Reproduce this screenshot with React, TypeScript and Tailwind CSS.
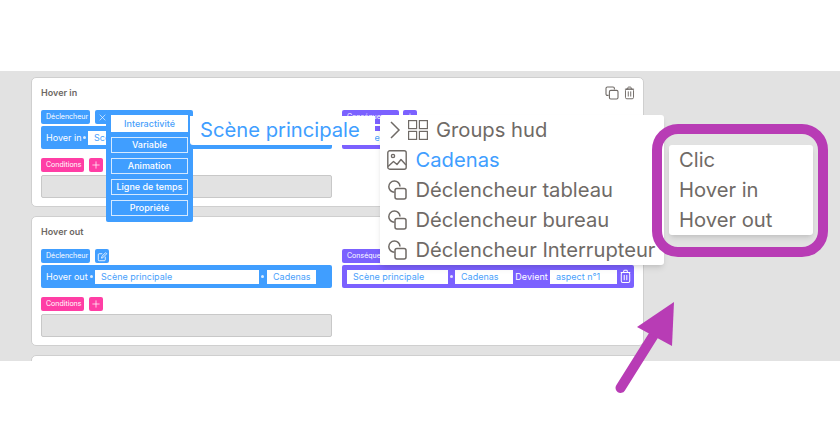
import React from "react";

function TrashIcon({ className }: { className?: string }) {
  return (
    <svg viewBox="0 0 12 16" className={className} fill="none" stroke="currentColor" strokeWidth="1.1" strokeLinecap="round" strokeLinejoin="round">
      <path d="M1.2 3.6h9.6M4 3.4V2.2c0-.6.4-1 1-1h2c.6 0 1 .4 1 1v1.2" />
      <rect x="1.4" y="3.6" width="9.2" height="11" rx="1.6" />
      <path d="M4.6 6.6v5M7.4 6.6v5" />
    </svg>
  );
}

function CopyIcon({ className }: { className?: string }) {
  return (
    <svg viewBox="0 0 14 14" className={className} fill="none" stroke="currentColor" strokeWidth="1.1" strokeLinejoin="round">
      <path d="M3.6 9.4H2.4a1.4 1.4 0 0 1-1.4-1.4V2.4A1.4 1.4 0 0 1 2.4 1H8a1.4 1.4 0 0 1 1.4 1.4v1.2" />
      <rect x="4.4" y="4.4" width="8.6" height="8.6" rx="1.4" />
    </svg>
  );
}

function ShapesIcon() {
  return (
    <svg viewBox="0 0 20 20" className="w-5 h-5 shrink-0" fill="none" stroke="currentColor" strokeWidth="1.5" strokeLinejoin="round">
      <path d="M7.5 12.2A5.6 5.6 0 1 1 13 6.6" />
      <rect x="8" y="8.4" width="11" height="10.6" rx="2" />
    </svg>
  );
}

function Badge({ color, className, children }: { color: string; className?: string; children: React.ReactNode }) {
  return (
    <span className={`flex items-center pl-[5px] h-[14px] rounded-[2px] text-[7px] text-white ${color} ${className ?? ""}`}>
      {children}
    </span>
  );
}

function Field({ className, children }: { className: string; children: React.ReactNode }) {
  return (
    <span className={`flex items-center h-[14px] bg-white text-[#4a9ffb] text-[9px] overflow-hidden whitespace-nowrap ${className}`}>
      {children}
    </span>
  );
}

function Dot() {
  return <span className="w-[3px] h-[3px] rounded-full bg-white/80 shrink-0" />;
}

function PlusIcon() {
  return (
    <svg viewBox="0 0 10 10" className="w-[8px] h-[8px]" fill="none" stroke="currentColor" strokeWidth="0.9">
      <path d="M5 0.5v9M0.5 5h9" />
    </svg>
  );
}

function RuleCard({ title, first, editing }: { title: string; first: React.ReactNode; editing?: boolean }) {
  return (
    <div className="relative shrink-0 h-[130px] w-[613px] rounded-[5px] bg-white border border-[#cfcfcf] pl-[9px] pt-[8px]">
      <div className="flex justify-between h-[14px] items-center text-[9px] font-semibold text-[#6d6864]">
        {title}
        {editing && (
          <span className="flex items-center gap-[5px] pr-[8px] text-[#6f6a66]">
            <CopyIcon className="w-[14px] h-[14px]" />
            <TrashIcon className="w-[11px] h-[14px]" />
          </span>
        )}
      </div>
      <div className="flex gap-[10px] mt-[10px]">
        <div className="w-[291px]">
          <div className="flex gap-[5px]">
            <Badge color="bg-[#409eff]" className="w-[49px]">Déclencheur</Badge>
            <span className="flex items-center justify-center w-[14px] h-[14px] rounded-[2px] bg-[#409eff] text-white">
              {editing ? (
                <svg viewBox="0 0 10 10" className="w-[7px] h-[7px]" fill="none" stroke="currentColor" strokeWidth="0.9">
                  <path d="M1 1l8 8M9 1l-8 8" />
                </svg>
              ) : (
                <svg viewBox="0 0 12 12" className="w-[11px] h-[11px]" fill="none" stroke="currentColor" strokeWidth="0.9" strokeLinecap="round">
                  <path d="M9 6.6v3a1 1 0 0 1-1 1H2.4a1 1 0 0 1-1-1V4a1 1 0 0 1 1-1h3M5 7.4l.4-1.6 4-4 1.2 1.2-4 4z" />
                </svg>
              )}
            </span>
          </div>
          <div className="flex items-center gap-[2px] h-[23px] mt-[2px] px-[5px] rounded-[2px] bg-[#409eff] text-white text-[9px]">
            {first}
          </div>
          <div className="flex gap-[5px] mt-[9px]">
            <Badge color="bg-[#ff3ea5]" className="w-[43px]">Conditions</Badge>
            <span className="flex items-center justify-center w-[14px] h-[14px] rounded-[2px] bg-[#ff3ea5] text-white">
              <PlusIcon />
            </span>
          </div>
          <div className="h-[23px] mt-[3px] rounded-[2px] bg-[#e2e2e2] border border-[#c8c8c8]" />
        </div>
        <div>
          <div className="flex gap-[4px]">
            <Badge color="bg-[#7b61ff]" className="w-[57px]">Conséquence</Badge>
            <span className="flex items-center justify-center w-[14px] h-[14px] rounded-[2px] bg-[#7b61ff] text-white">
              <PlusIcon />
            </span>
          </div>
          <div className="flex items-center h-[23px] w-[292px] mt-[2px] pl-[5px] rounded-[2px] bg-[#7b61ff] text-white text-[9px]">
            <Field className="w-[101px] pl-[6px] shrink-0">Scène principale</Field>
            <span className="w-[7px] flex justify-center shrink-0"><Dot /></span>
            <Field className="w-[58px] pl-[6px] shrink-0">Cadenas</Field>
            <span className="w-[37px] text-center shrink-0">Devient</span>
            <Field className="w-[67px] pl-[6px] shrink-0">aspect n°1</Field>
            <TrashIcon className="w-[11px] h-[15px] ml-[3px] text-white shrink-0" />
          </div>
        </div>
      </div>
    </div>
  );
}

export default function App() {
  return (
    <div className="relative h-[431px] w-[840px] overflow-hidden bg-white font-['Inter',sans-serif]">
      <div className="h-[71px]" />

      {/* Liste des interactions */}
      <main className="h-[290px] overflow-hidden bg-[#e2e2e2] pl-[31px] pt-[6px] flex flex-col gap-[9px]">
        <RuleCard
          title="Hover in"
          editing
          first={
            <>
              <span className="w-[35px] shrink-0 whitespace-nowrap">Hover in</span>
              <Dot />
              <Field className="w-[164px] pl-[6px]">Scène principale</Field>
            </>
          }
        />
        <RuleCard
          title="Hover out"
          first={
            <>
              <span className="w-[42px] shrink-0 whitespace-nowrap">Hover out</span>
              <Dot />
              <Field className="w-[164px] pl-[6px]">Scène principale</Field>
              <Dot />
              <Field className="w-[49px] pl-[6px] ml-[1px]">Cadenas</Field>
            </>
          }
        />
        <div className="shrink-0 h-[40px] w-[613px] rounded-[5px] bg-white border border-[#cfcfcf]" />
      </main>

      {/* Onglets du menu bleu */}
      <div className="absolute left-[106px] top-[110px] w-[87px] h-[112px] rounded-[2px] bg-[#409eff] px-[5px] pt-[5px] flex flex-col gap-[5px] text-[9px] font-medium">
        <span className="flex items-center justify-center h-[17px] bg-white text-[#4a9ffb]">Interactivité</span>
        {["Variable", "Animation", "Ligne de temps", "Propriété"].map((label) => (
          <span key={label} className="flex items-center justify-center h-[16px] border border-[#d5e9ff] text-white">
            {label}
          </span>
        ))}
      </div>

      {/* Champ agrandi */}
      <div className="absolute left-[190px] top-[116px] w-[185px] h-[29px] rounded-bl-[3px] bg-white pl-[10px] flex items-center text-[20.2px] text-[#409eff] whitespace-nowrap">
        Scène principale
      </div>

      {/* Liste des objets */}
      <div className="absolute left-[380px] top-[115px] w-[284px] h-[150px] rounded-[3px] bg-white shadow-md text-[20.2px] text-[#6f6a66] whitespace-nowrap">
        <div className="flex items-center h-[30px] pl-[9px]">
          <svg viewBox="0 0 12 20" className="w-[12px] h-5 shrink-0" fill="none" stroke="currentColor" strokeWidth="1.5">
            <path d="M2 2l8 8-8 8" />
          </svg>
          <svg viewBox="0 0 20 20" className="w-5 h-5 ml-[7px] shrink-0" fill="none" stroke="currentColor" strokeWidth="1.2">
            <rect x="0.6" y="0.6" width="8" height="8" />
            <rect x="11.4" y="0.6" width="8" height="8" />
            <rect x="0.6" y="11.4" width="8" height="8" />
            <rect x="11.4" y="11.4" width="8" height="8" />
          </svg>
          <span className="ml-[8px]">Groups hud</span>
        </div>
        <div className="flex items-center h-[30px] pl-[7px]">
          <svg viewBox="0 0 20 20" className="w-5 h-5 shrink-0" fill="none" stroke="currentColor" strokeWidth="1.4" strokeLinejoin="round">
            <rect x="0.8" y="0.8" width="18.4" height="18.4" rx="2" />
            <circle cx="6" cy="6" r="1.6" />
            <path d="M1 16.5l5.5-5 3.5 3 4-5 5 5.5" />
          </svg>
          <span className="ml-[8.5px] text-[#409eff]">Cadenas</span>
        </div>
        {["Déclencheur tableau", "Déclencheur bureau", "Déclencheur Interrupteur"].map((label) => (
          <div key={label} className="flex items-center h-[30px] pl-[7px]">
            <ShapesIcon />
            <span className="ml-[8.5px]">{label}</span>
          </div>
        ))}
      </div>

      {/* Annotation violette */}
      <div className="absolute left-[652px] top-[124px] w-[176px] h-[133px] rounded-[26px] border-[10px] border-[#b83cb5]" />
      <div className="absolute left-[669px] top-[145px] w-[144px] h-[90px] rounded-[3px] bg-white shadow-md pl-[10px] text-[20.2px] text-[#6f6a66]">
        <div className="flex items-center h-[30px]">Clic</div>
        <div className="flex items-center h-[30px]">Hover in</div>
        <div className="flex items-center h-[30px]">Hover out</div>
      </div>
      <svg className="absolute left-[610px] top-[295px] w-[70px] h-[110px]" viewBox="0 0 70 110">
        <path d="M10.5 93L45 38" stroke="#b83cb5" strokeWidth="10" strokeLinecap="round" fill="none" />
        <path d="M27 32L64 7L62 51z" fill="#b83cb5" />
      </svg>
    </div>
  );
}
